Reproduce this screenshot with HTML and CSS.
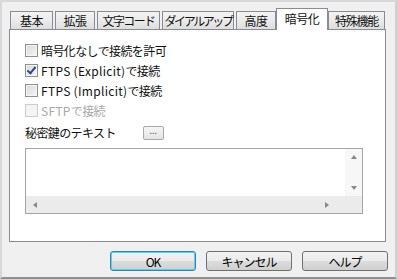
FILE: index.html
```html
<!DOCTYPE html>
<html lang="ja">
<head>
  <meta charset="UTF-8">
  <title>暗号化</title>
  <link rel="stylesheet" href="styles.css">
</head>
<body>
  <div class="dialog">
    <div class="tabs">
      <div class="tab t-basic">基本</div>
      <div class="tab t-ext">拡張</div>
      <div class="tab t-code">文字コード</div>
      <div class="tab t-dial">ダイアルアップ</div>
      <div class="tab t-adv">高度</div>
      <div class="tab active t-enc">暗号化</div>
      <div class="tab t-special">特殊機能</div>
    </div>

    <div class="panel">
      <label class="check"><span class="box"></span>暗号化なしで接続を許可</label>
      <label class="check"><span class="box checked"></span><span class="latin">FTPS (Explicit)</span>で接続</label>
      <label class="check"><span class="box"></span><span class="latin">FTPS (Implicit)</span>で接続</label>
      <label class="check disabled"><span class="box"></span><span class="latin">SFTP</span>で接続</label>

      <div class="key-row">
        <span>秘密鍵のテキスト</span>
        <span class="small-btn">...</span>
      </div>

      <div class="textbox">
        <div class="text-area"></div>
        <div class="vscroll">
          <span class="arrow up"></span>
          <span class="arrow down"></span>
        </div>
        <div class="hscroll">
          <span class="arrow left"></span>
          <span class="arrow right"></span>
        </div>
        <div class="corner"></div>
      </div>
    </div>

    <div class="buttons">
      <div class="btn default">OK</div>
      <div class="btn">キャンセル</div>
      <div class="btn">ヘルプ</div>
    </div>
  </div>
</body>
</html>
```

FILE: styles.css
```css
body {
  margin: 0;
  font-family: "Noto Sans CJK JP", "Liberation Sans", sans-serif;
  font-size: 11px;
  color: #000;
}
.dialog {
  width: 397px;
  height: 279px;
  box-sizing: border-box;
  background: #f0f0f0;
  border-top: 2px solid #d8d8d8;
  border-left: 2px solid #d8d8d8;
  border-right: 2px solid #d0d0d0;
  border-bottom: 2px solid #909090;
  padding: 6px 0 0 7px;
}
.tabs {
  display: flex;
  align-items: flex-end;
  height: 21px;
  margin-left: 1px;
  position: relative;
  z-index: 1;
}
.tab {
  height: 18px;
  box-sizing: border-box;
  border: 1px solid #898c95;
  border-bottom: none;
  margin-right: 2px;
  background: linear-gradient(#f3f3f3, #ebebeb 50%, #dddddd);
  display: flex;
  align-items: center;
  justify-content: center;
  font-size: 12px;
  white-space: nowrap;
  letter-spacing: -0.5px;
  color: #111;
}
.t-basic { width: 43px; }
.t-ext { width: 40px; }
.t-code { width: 63px; letter-spacing: -1.6px; }
.t-dial { width: 72px; letter-spacing: -2.4px; }
.t-adv { width: 40px; margin-right: 0; }
.t-special { width: 57px; margin-left: 0; margin-right: 0; letter-spacing: -1.2px; }
.tab.active {
  width: 52px;
  height: 22px;
  margin-bottom: -1px;
  margin-right: 0;
  background: #fff;
  align-items: flex-start;
  padding-top: 1px;
}
.panel {
  width: 377px;
  height: 213px;
  box-sizing: border-box;
  border: 1px solid #898c95;
  background: #fff;
  padding: 14px 0 0 15px;
}
.check {
  display: flex;
  align-items: center;
  height: 13px;
  margin-bottom: 7px;
  font-size: 12px;
  letter-spacing: -0.6px;
  color: #111;
}
.latin {
  letter-spacing: 0.3px;
}
.box {
  width: 13px;
  height: 13px;
  box-sizing: border-box;
  border: 1px solid #8e8f8f;
  background: linear-gradient(135deg, #d8d8d8, #f6f6f6);
  box-shadow: inset 0 0 0 1px #f4f4f4;
  margin-right: 3px;
  position: relative;
}
.box.checked::after {
  content: "";
  position: absolute;
  left: 3px;
  top: 0px;
  width: 3px;
  height: 7px;
  border-right: 2px solid #2e4a86;
  border-bottom: 2px solid #2e4a86;
  transform: rotate(40deg);
}
.check.disabled {
  color: #a8a8a8;
}
.check.disabled .box {
  border-color: #cdcdcd;
  background: #f4f4f4;
}
.key-row {
  display: flex;
  align-items: flex-start;
  height: 24px;
  font-size: 12px;
  letter-spacing: -0.6px;
  color: #111;
}
.small-btn {
  margin-left: 27px;
  margin-top: 2px;
  width: 21px;
  height: 14px;
  box-sizing: border-box;
  border: 1px solid #a8a8a8;
  border-radius: 2px;
  background: linear-gradient(#f6f6f6, #e4e4e4);
  font-size: 9px;
  line-height: 8px;
  text-align: center;
  color: #555;
  letter-spacing: 0;
}
.textbox {
  width: 338px;
  height: 66px;
  box-sizing: border-box;
  border: 1px solid #a5a5a5;
  display: grid;
  grid-template-columns: 1fr 17px;
  grid-template-rows: 1fr 17px;
}
.vscroll {
  background: #f7f7f7;
  display: flex;
  flex-direction: column;
  justify-content: space-between;
  align-items: center;
  padding: 6px 0;
}
.hscroll {
  background: #ebebeb;
  display: flex;
  justify-content: space-between;
  align-items: center;
  padding: 0 16px 0 7px;
}
.corner {
  background: #ebebeb;
}
.arrow {
  width: 0;
  height: 0;
  border: 3px solid transparent;
}
.arrow.up { border-bottom: 4px solid #888; border-top: none; }
.arrow.down { border-top: 4px solid #888; border-bottom: none; }
.arrow.left { border-right: 4px solid #888; border-left: none; }
.arrow.right { border-left: 4px solid #888; border-right: none; }
.buttons {
  display: flex;
  justify-content: flex-end;
  gap: 10px;
  margin-top: 9px;
  margin-right: 7px;
}
.btn {
  width: 86px;
  height: 20px;
  box-sizing: border-box;
  border: 1px solid #707070;
  border-radius: 3px;
  background: linear-gradient(#f2f2f2, #ebebeb 50%, #dddddd 51%, #cfcfcf);
  display: flex;
  align-items: center;
  justify-content: center;
  font-size: 12px;
  letter-spacing: -1px;
}
.btn.default {
  border-color: #3c7fb1;
  box-shadow: inset 0 0 0 1px #48d8fb;
}
```
